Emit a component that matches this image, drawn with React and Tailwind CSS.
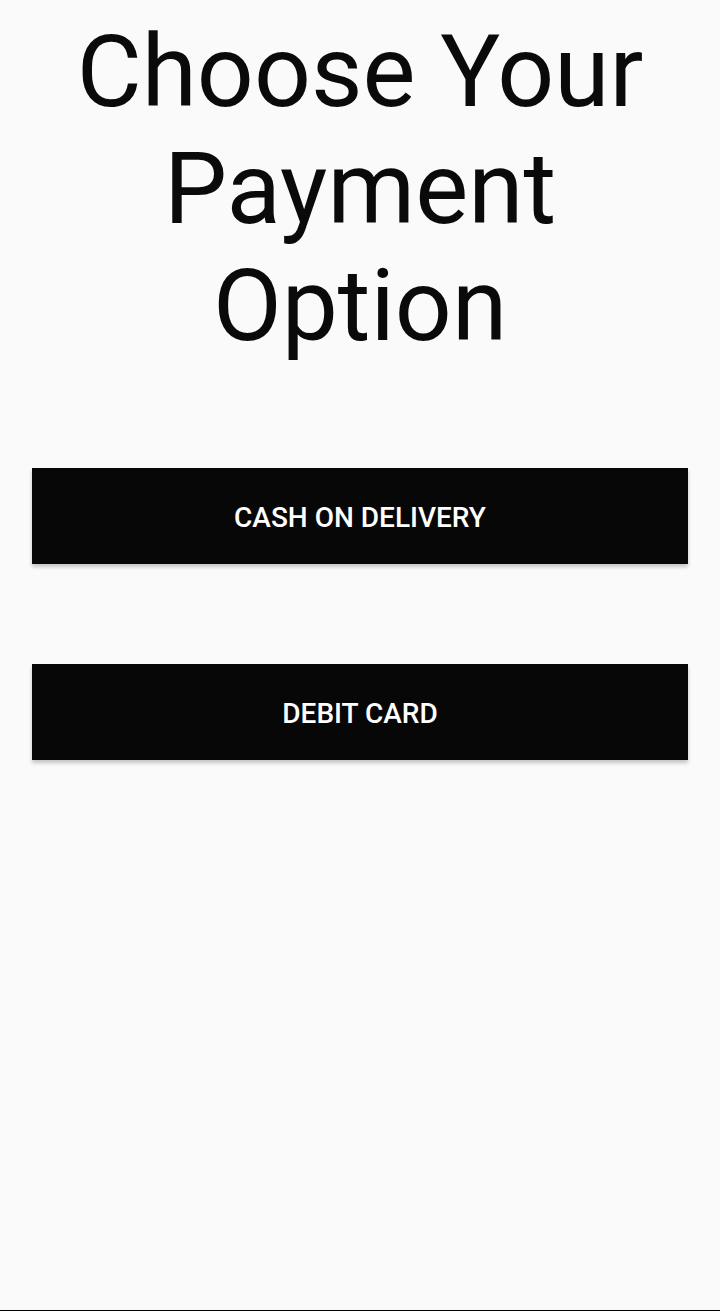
export default function App() {
  return (
    <div className="w-[720px] h-[1311px] bg-[#fafafa] flex flex-col border-b border-black" style={{ fontFamily: "Roboto, 'Liberation Sans', sans-serif" }}>
      <h1 className="mt-[13px] text-center text-[100px] leading-[117px] text-[#0a0a0a] font-normal px-4">
        Choose Your Payment Option
      </h1>
      <div className="mt-[104px] flex flex-col gap-[100px] px-8">
        <button className="h-[96px] w-full pt-[4px] bg-[#070707] text-white text-[28px] font-medium uppercase shadow-[0_3px_4px_rgba(0,0,0,0.22)]">
          Cash on Delivery
        </button>
        <button className="h-[96px] w-full pt-[4px] bg-[#070707] text-white text-[28px] font-medium uppercase shadow-[0_3px_4px_rgba(0,0,0,0.22)]">
          Debit Card
        </button>
      </div>
    </div>
  );
}
